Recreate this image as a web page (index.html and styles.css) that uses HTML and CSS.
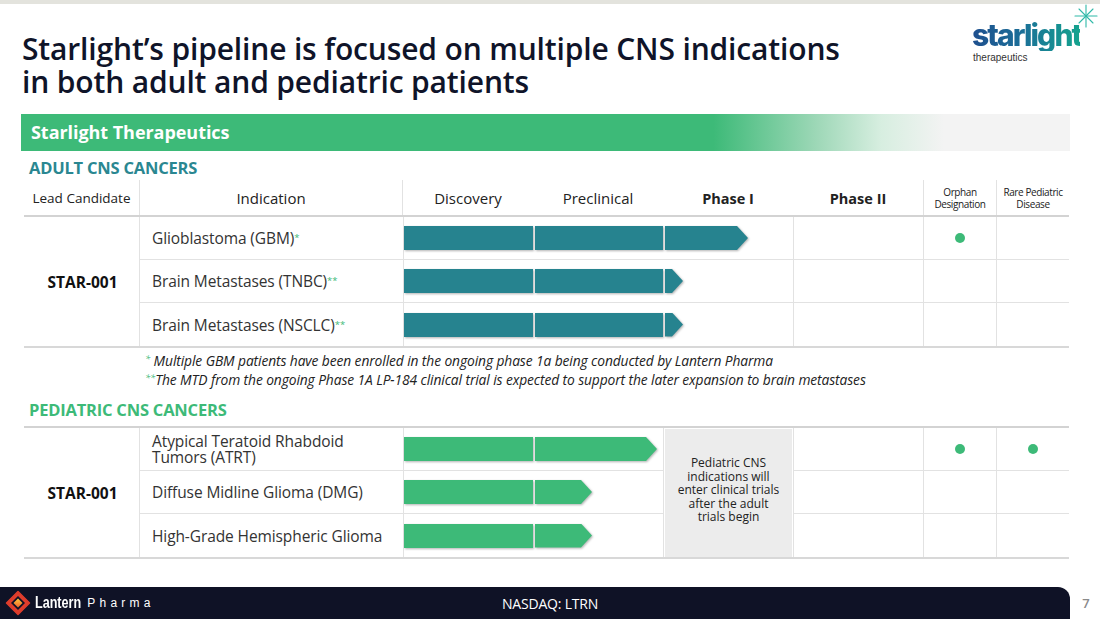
FILE: index.html
```html
<!DOCTYPE html>
<html lang="en">
<head>
<meta charset="utf-8">
<title>Starlight pipeline</title>
<link rel="stylesheet" href="styles.css">
</head>
<body>
<div class="page">
  <div class="topband"></div>
  <header class="top">
    <h1 class="title">Starlight’s pipeline is focused on multiple CNS indications<br>in both adult and pediatric patients</h1>
    <div class="slogo">
      <svg class="spark" width="24" height="24" viewBox="0 0 24 24" aria-hidden="true">
        <g stroke="#2fb9a8" stroke-width="1.1" stroke-linecap="round">
          <line x1="12" y1="1" x2="12" y2="23"/>
          <line x1="1" y1="12" x2="23" y2="12"/>
          <line x1="5" y1="5" x2="19" y2="19"/>
          <line x1="19" y1="5" x2="5" y2="19"/>
        </g>
      </svg>
      <div class="sword">starlight</div>
      <div class="ssub">therapeutics</div>
    </div>
  </header>

  <div class="banner">Starlight Therapeutics</div>

  <h2 class="label teal">ADULT CNS CANCERS</h2>
  <div class="thead">
    <div class="th bl-r">Lead Candidate</div>
    <div class="th bl-r ind">Indication</div>
    <div class="th">Discovery</div>
    <div class="th">Preclinical</div>
    <div class="th b">Phase I</div>
    <div class="th b">Phase II</div>
    <div class="th sm bl-l">Orphan<br>Designation</div>
    <div class="th sm bl-l">Rare Pediatric<br>Disease</div>
  </div>
  <div class="tbody adult">
    <div class="lead">STAR-001</div>
    <div class="cell ind">Glioblastoma (GBM)<sup>*</sup></div>
    <div class="cell bl-l"><div class="bars teal-bars"><span class="seg s1"></span><span class="seg s2"></span><span class="seg arrow" style="width:83px"></span></div></div>
    <div class="cell bl-l"></div>
    <div class="cell bl-l center"><span class="dot"></span></div>
    <div class="cell bl-l"></div>

    <div class="cell ind">Brain Metastases (TNBC)<sup>**</sup></div>
    <div class="cell bl-l"><div class="bars teal-bars"><span class="seg s1"></span><span class="seg s2"></span><span class="seg arrow" style="width:18px"></span></div></div>
    <div class="cell bl-l"></div>
    <div class="cell bl-l"></div>
    <div class="cell bl-l"></div>

    <div class="cell ind last">Brain Metastases (NSCLC)<sup>**</sup></div>
    <div class="cell bl-l last"><div class="bars teal-bars"><span class="seg s1"></span><span class="seg s2"></span><span class="seg arrow" style="width:18px"></span></div></div>
    <div class="cell bl-l last"></div>
    <div class="cell bl-l last"></div>
    <div class="cell bl-l last"></div>
  </div>

  <div class="notes">
    <p><sup>*</sup> Multiple GBM patients have been enrolled in the ongoing phase 1a being conducted by Lantern Pharma</p>
    <p><sup>**</sup>The MTD from the ongoing Phase 1A LP-184 clinical trial is expected to support the later expansion to brain metastases</p>
  </div>

  <h2 class="label green ped">PEDIATRIC CNS CANCERS</h2>
  <div class="tbody ped-table">
    <div class="lead">STAR-001</div>
    <div class="graycell"><div class="graybox">Pediatric CNS indications will enter clinical trials after the adult trials begin</div></div>

    <div class="cell ind two">Atypical Teratoid Rhabdoid<br>Tumors (ATRT)</div>
    <div class="cell bl-l"><div class="bars green-bars"><span class="seg s1"></span><span class="seg arrow" style="width:122px"></span></div></div>
    <div class="cell bl-l"></div>
    <div class="cell bl-l center"><span class="dot"></span></div>
    <div class="cell bl-l center"><span class="dot"></span></div>

    <div class="cell ind">Diffuse Midline Glioma (DMG)</div>
    <div class="cell bl-l"><div class="bars green-bars"><span class="seg s1"></span><span class="seg arrow" style="width:57px"></span></div></div>
    <div class="cell bl-l"></div>
    <div class="cell bl-l"></div>
    <div class="cell bl-l"></div>

    <div class="cell ind last">High-Grade Hemispheric Glioma</div>
    <div class="cell bl-l last"><div class="bars green-bars"><span class="seg s1"></span><span class="seg arrow" style="width:57px"></span></div></div>
    <div class="cell bl-l last"></div>
    <div class="cell bl-l last"></div>
    <div class="cell bl-l last"></div>
  </div>

  <footer class="footer">
    <div class="fbar">
      <div class="llogo">
        <svg width="26" height="26" viewBox="0 0 26 26" aria-hidden="true">
          <defs>
            <linearGradient id="lg" x1="0" y1="0" x2="0" y2="1">
              <stop offset="0" stop-color="#ffc83a"/>
              <stop offset="1" stop-color="#f0612a"/>
            </linearGradient>
          </defs>
          <path d="M13 1.5 L24.5 13 L17 20.5 L13 24.5 L9 20.5 L1.5 13 Z" fill="#df3d2c" stroke="#df3d2c" stroke-width="1.5" stroke-linejoin="round"/>
          <path d="M13 6 L20 13 L13 20 L6 13 Z" fill="#0f1226"/>
          <path d="M13 8.5 L17.5 13 L13 17.5 L8.5 13 Z" fill="url(#lg)"/>
        </svg>
        <span class="lname">Lantern</span>
        <span class="lpharma">Pharma</span>
      </div>
      <div class="nasdaq">NASDAQ: LTRN</div>
    </div>
    <div class="pnum">7</div>
  </footer>
</div>
</body>
</html>
```
FILE: styles.css
```css
* { box-sizing: border-box; }
html, body { margin: 0; padding: 0; background: #fff; }
body { font-family: "Open Sans", "Liberation Sans", sans-serif; color: #222; }

.page {
  width: 1100px;
  height: 619px;
  display: flex;
  flex-direction: column;
  overflow: hidden;
}

.topband { height: 4px; background: #e3e3dd; flex: none; }

.top {
  display: flex;
  justify-content: space-between;
  align-items: flex-start;
  height: 110px;
  flex: none;
}
.title {
  margin: 28px 0 0 22px;
  font-size: 30px;
  line-height: 33px;
  font-weight: 600;
  color: #0f1429;
  letter-spacing: -0.15px;
}

.slogo {
  position: relative;
  margin: 16px 20px 0 0;
  width: 108px;
  display: flex;
  flex-direction: column;
}
.sword {
  font-family: "Inter", "Liberation Sans", sans-serif;
  font-weight: 800;
  font-size: 30px;
  line-height: 31px;
  letter-spacing: -1.9px;
  background: linear-gradient(90deg, #1f4f8e 0%, #1b6e98 45%, #14a38e 100%);
  -webkit-background-clip: text;
  background-clip: text;
  color: transparent;
}
.ssub {
  font-family: "Liberation Sans", sans-serif;
  font-size: 10px;
  line-height: 11px;
  color: #333;
  margin-left: 1px;
  margin-top: 1px;
}
.spark { position: absolute; right: -18px; top: -16px; }

.banner {
  flex: none;
  margin: 0 30px 0 21px;
  height: 37px;
  line-height: 37px;
  padding-left: 10px;
  color: #fff;
  font-weight: 700;
  font-size: 18px;
  letter-spacing: -0.05px;
  background: linear-gradient(90deg, #3dba78 0%, #3dba78 66%, #9fd8b8 76%, #d7eee0 82%, #f3f3f3 88%, #f3f3f3 100%);
}

.label {
  margin: 7px 0 2px 29px;
  font-size: 16.5px;
  line-height: 20px;
  font-weight: 700;
  letter-spacing: -0.2px;
}
.label.teal { color: #2a8791; }
.label.green { color: #3dba78; }
.label.ped { margin-top: 11px; margin-bottom: 6px; }

.thead {
  margin-left: 24px;
  width: 1045px;
  height: 37px;
  display: grid;
  grid-template-columns: 116px 263px 130px 130px 130px 130px 73px 73px;
  border-bottom: 2px solid #d3d3d3;
  flex: none;
}
.th {
  display: flex;
  align-items: center;
  justify-content: center;
  text-align: center;
  font-size: 15px;
  color: #222;
  padding-top: 1px;
}
.th:first-child { font-size: 13.5px; }
.th.b { font-weight: 700; font-size: 14.5px; }
.th.sm { font-size: 10px; line-height: 12px; letter-spacing: -0.4px; padding-top: 0; }
.bl-r { border-right: 1px solid #e2e2e2; }
.bl-l { border-left: 1px solid #e2e2e2; }

.tbody {
  margin-left: 24px;
  width: 1045px;
  display: grid;
  grid-template-rows: 43px 43px 43px;
  border-bottom: 2px solid #d8d8d8;
  flex: none;
}
.tbody.adult { grid-template-columns: 116px 263px 390px 130px 73px 73px; }
.tbody.ped-table {
  grid-template-columns: 116px 263px 260px 130px 130px 73px 73px;
  border-top: 2px solid #d3d3d3;
}

.lead {
  grid-column: 1;
  grid-row: 1 / 4;
  border-right: 1px solid #e2e2e2;
  display: flex;
  align-items: center;
  justify-content: center;
  font-weight: 700;
  font-size: 15.5px;
  color: #111;
  padding-left: 2px;
}
.cell {
  border-bottom: 1px solid #e2e2e2;
  display: flex;
  align-items: center;
}
.cell.last { border-bottom: none; }
.cell.center { justify-content: center; }
.cell.ind {
  padding-left: 12px;
  font-size: 15.5px;
  color: #333;
  letter-spacing: -0.1px;
}
.cell.ind.two { line-height: 15.5px; padding-top: 1px; }
.cell sup {
  color: #3dba78;
  font-size: 9.5px;
  vertical-align: 6px;
  line-height: 0;
}

.graycell {
  grid-column: 4;
  grid-row: 1 / 4;
  border-left: 1px solid #e2e2e2;
  padding: 1px 1px 0 1px;
}
.graybox {
  height: 100%;
  background: #ececec;
  display: flex;
  align-items: center;
  justify-content: center;
  text-align: center;
  font-size: 12px;
  line-height: 13.5px;
  color: #222;
  padding: 0 10px 6px;
}

.bars {
  display: flex;
  gap: 2px;
  height: 24px;
  filter: drop-shadow(1px 1px 1px rgba(0,0,0,0.3));
}
.seg { display: block; height: 24px; }
.teal-bars .seg { background: #26838f; }
.green-bars .seg { background: #3dba78; }
.seg.s1 { width: 129px; }
.seg.s2 { width: 128px; }
.seg.arrow {
  clip-path: polygon(0 0, calc(100% - 11px) 0, 100% 50%, calc(100% - 11px) 100%, 0 100%);
}

.dot {
  width: 10px;
  height: 10px;
  border-radius: 50%;
  background: #3dba78;
  display: block;
}

.notes {
  margin: 3px 0 0 145px;
  font-style: italic;
  font-size: 13.8px;
  line-height: 19px;
  color: #222;
  letter-spacing: -0.1px;
}
.notes p { margin: 0; }
.notes sup {
  color: #3dba78;
  font-size: 9.5px;
  vertical-align: 4px;
  line-height: 0;
}

.footer {
  margin-top: auto;
  height: 32px;
  display: flex;
  flex: none;
}
.fbar {
  width: 1070px;
  background: #0f1226;
  border-top-right-radius: 12px;
  display: flex;
  align-items: center;
}
.llogo {
  width: 160px;
  display: flex;
  align-items: center;
  padding-left: 5px;
}
.lname {
  margin-left: 4px;
  margin-right: -16px;
  font-family: "Liberation Sans", sans-serif;
  font-weight: 700;
  font-size: 17px;
  color: #fff;
  transform: scaleX(0.74);
  transform-origin: left center;
}
.lpharma {
  margin-left: 6px;
  font-family: "Liberation Sans", sans-serif;
  font-size: 12px;
  color: #fff;
  letter-spacing: 4.2px;
}
.nasdaq {
  margin-left: 342px;
  font-size: 14px;
  color: #fff;
  font-weight: 400;
  letter-spacing: -0.2px;
}
.pnum {
  flex: 1;
  text-align: center;
  color: #8a8a8a;
  font-size: 13px;
  font-weight: 600;
  line-height: 32px;
  padding-left: 2px;
}
```
